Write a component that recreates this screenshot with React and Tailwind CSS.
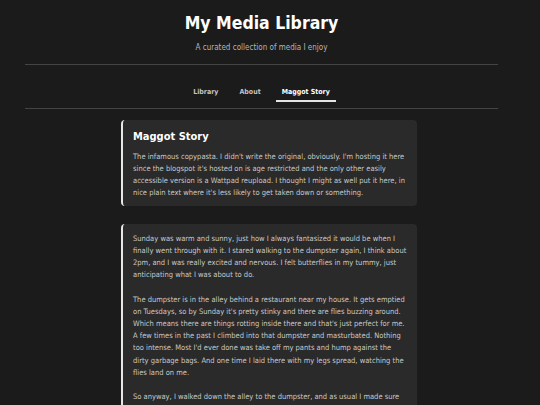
import React from 'react';

const navItems = ['Library', 'About', 'Maggot Story'];

const paragraphs = [
  "Sunday was warm and sunny, just how I always fantasized it would be when I finally went through with it. I stared walking to the dumpster again, I think about 2pm, and I was really excited and nervous. I felt butterflies in my tummy, just anticipating what I was about to do.",
  "The dumpster is in the alley behind a restaurant near my house. It gets emptied on Tuesdays, so by Sunday it's pretty stinky and there are flies buzzing around. Which means there are things rotting inside there and that's just perfect for me. A few times in the past I climbed into that dumpster and masturbated. Nothing too intense. Most I'd ever done was take off my pants and hump against the dirty garbage bags. And one time I laid there with my legs spread, watching the flies land on me.",
  "So anyway, I walked down the alley to the dumpster, and as usual I made sure",
];

const App = () => {
  return (
    <div
      className="min-h-[405px] bg-[#1b1b1b] text-[#cfcfcf] pr-[17px]"
      style={{ fontFamily: '"DejaVu Sans Condensed", "DejaVu Sans", Verdana, sans-serif', fontStretch: 'condensed' }}
    >
      <header className="pt-[10px] text-center">
        <h1 className="text-[17.5px] leading-[26px] font-bold text-white">My Media Library</h1>
        <p className="mt-[6px] text-[8px] leading-[12px] text-[#b5b5b5]">A curated collection of media I enjoy</p>
      </header>

      <nav className="mx-[25px] mt-[10px] border-y border-[#444]">
        <ul className="flex justify-center gap-[9px] pt-[22px] pb-[6px] text-[7px] font-bold">
          {navItems.map((item, i) => (
            <li
              key={item}
              className={
                i === navItems.length - 1
                  ? 'px-[6px] pb-[2px] border-b-2 border-[#e5e5e5] text-white'
                  : 'px-[6px] pb-[2px] border-b-2 border-transparent text-[#c4c4c4]'
              }
            >
              {item}
            </li>
          ))}
        </ul>
      </nav>

      <main className="ml-[121px] w-[296px] pt-[11px] pb-[20px]">
        <section className="rounded-[4px] border-l-2 border-[#e8e8e8] bg-[#2a2a2a] pl-[10px] pr-[9px] pt-[10px] pb-[6px]">
          <h2 className="text-[11px] leading-[14px] font-bold text-white">Maggot Story</h2>
          <p className="mt-[7px] text-[7.5px] leading-[12.3px] text-[#c8c8c8]">
            The infamous copypasta. I didn't write the original, obviously. I'm hosting it here since the blogspot it's hosted on is age restricted and the only other easily accessible version is a Wattpad reupload. I thought I might as well put it here, in nice plain text where it's less likely to get taken down or something.
          </p>
        </section>

        <section className="mt-[18px] rounded-[4px] border-l-2 border-[#e8e8e8] bg-[#2a2a2a] pl-[10px] pr-[9px] pt-[9px] pb-[20px]">
          {paragraphs.map((p, i) => (
            <p key={i} className={i > 0 ? 'mt-[12px] text-[7.5px] leading-[12.2px] text-[#c8c8c8]' : 'text-[7.5px] leading-[12.2px] text-[#c8c8c8]'}>
              {p}
            </p>
          ))}
        </section>
      </main>
    </div>
  );
};

export default App;
